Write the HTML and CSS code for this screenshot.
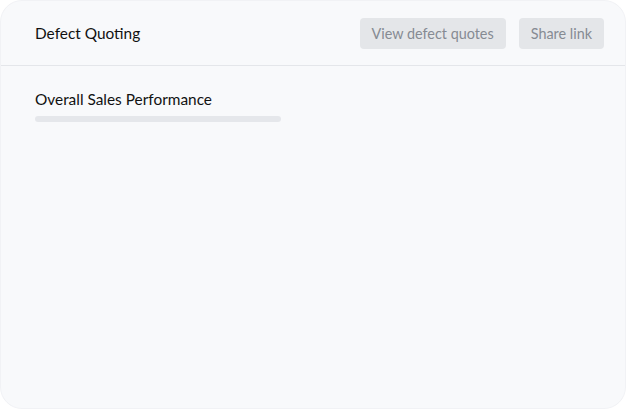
FILE: index.html
```html
<!DOCTYPE html>
<html>
<head>
<meta charset="utf-8">
<link rel="stylesheet" href="styles.css">
</head>
<body>
<div class="card">
  <header class="header">
    <h1 class="title">Defect Quoting</h1>
    <div class="actions">
      <button class="btn">View defect quotes</button>
      <button class="btn">Share link</button>
    </div>
  </header>
  <section class="section">
    <h2 class="section-title">Overall Sales Performance</h2>
    <div class="bar"></div>
  </section>
</div>
</body>
</html>
```
FILE: styles.css
```css
html, body {
  margin: 0;
  padding: 0;
  background: #ffffff;
}
body {
  font-family: Lato, "Noto Sans", sans-serif;
  width: 626px;
  height: 409px;
  overflow: hidden;
}
.card {
  box-sizing: border-box;
  width: 626px;
  height: 409px;
  background: #f8f9fb;
  border: 1px solid #f1f2f5;
  border-radius: 22px;
  overflow: hidden;
}
.header {
  display: flex;
  align-items: center;
  justify-content: space-between;
  height: 64px;
  padding: 0 21px 0 34px;
  border-bottom: 1px solid #e4e6ea;
}
.title {
  margin: 0;
  font-size: 15.4px;
  font-weight: 400;
  color: #111111;
}
.actions {
  display: flex;
  gap: 13px;
}
.btn {
  font-family: inherit;
  font-size: 14.4px;
  color: #868b93;
  background: #e4e6e9;
  border: none;
  border-radius: 4px;
  height: 31px;
  padding: 0 12px;
}
.section {
  padding: 23px 34px;
}
.section-title {
  margin: 0;
  font-size: 15.4px;
  font-weight: 400;
  color: #111111;
  line-height: 20px;
}
.bar {
  margin-top: 7px;
  width: 246px;
  height: 6px;
  border-radius: 3px;
  background: #e5e7eb;
}
```
